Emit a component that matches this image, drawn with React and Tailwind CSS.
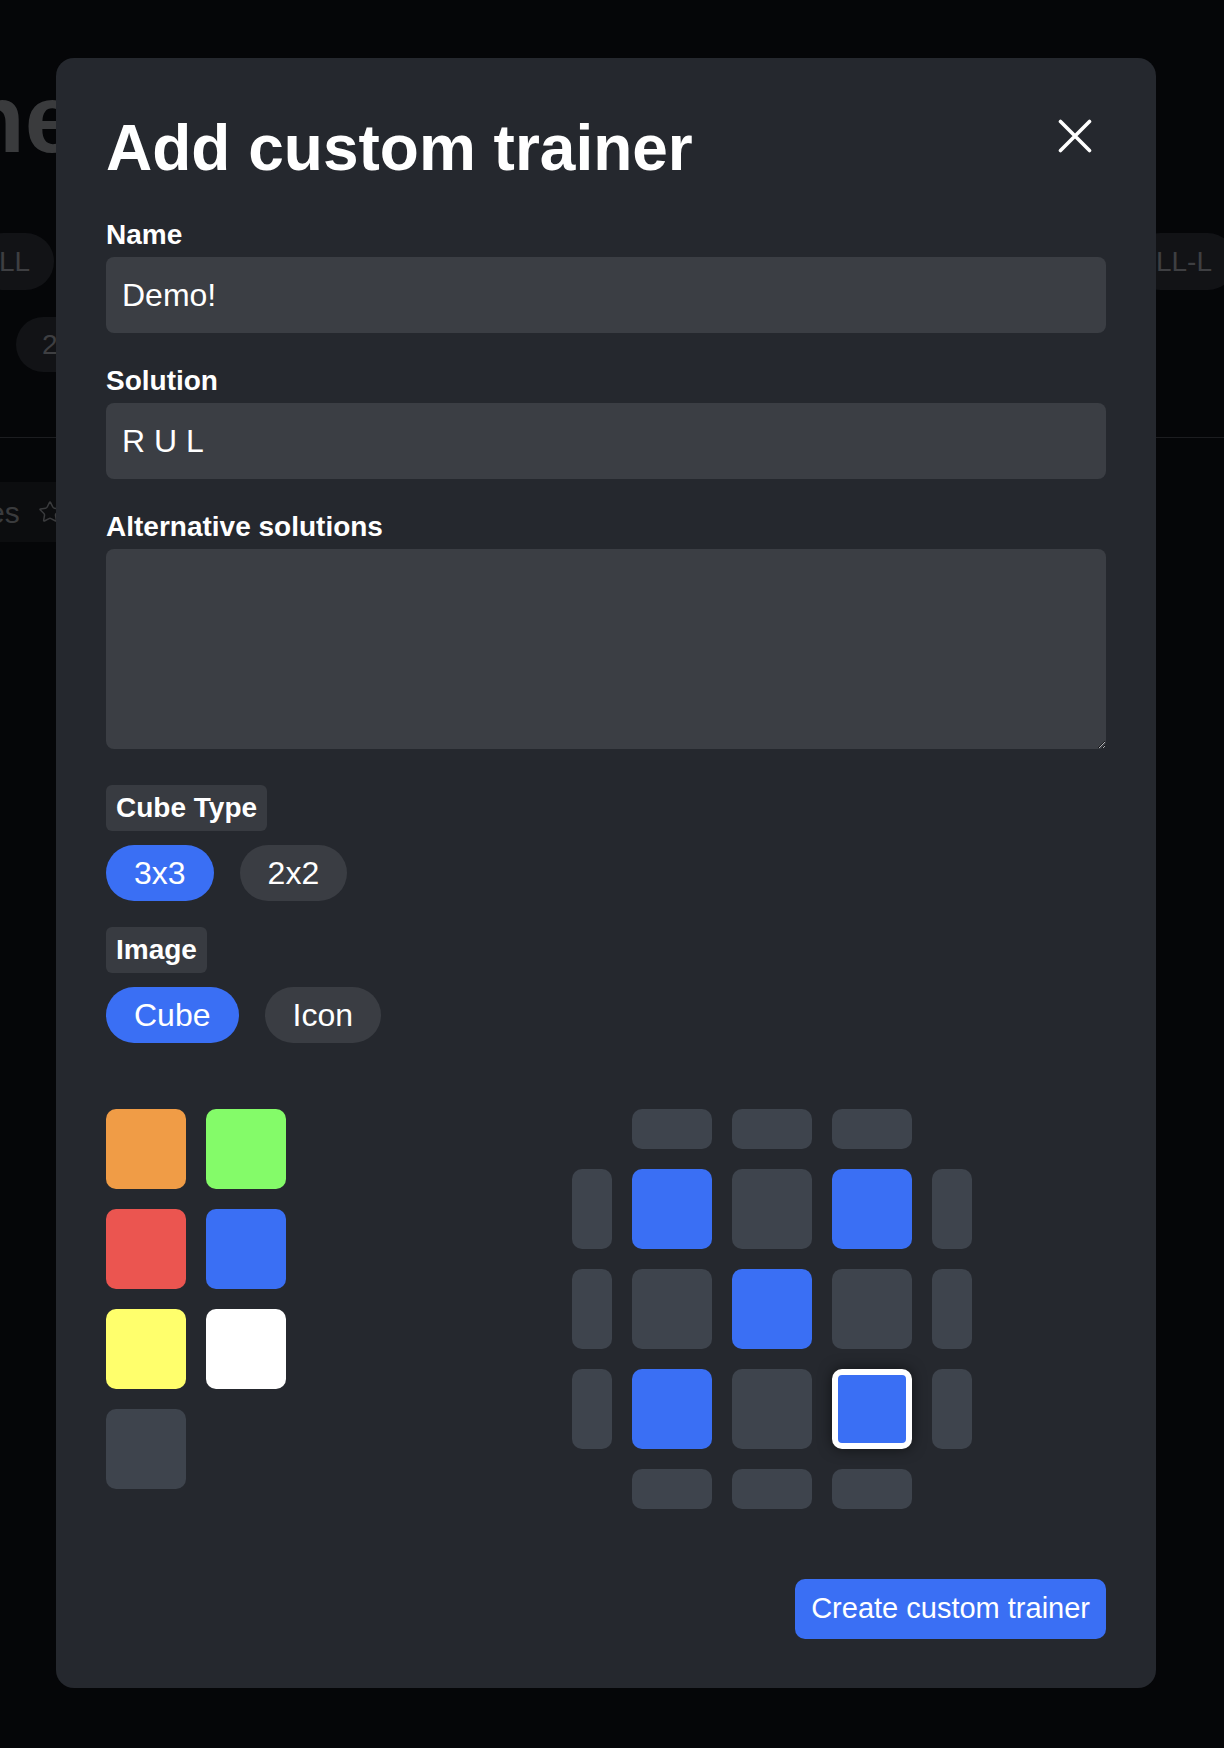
import React from 'react'
import { Star } from 'lucide-react'

const swatches = ['#f09c46', '#84fb69', '#eb5550', '#3a6ff4', '#ffff6c', '#ffffff', '#3e444d']

// cube face: 5x5 grid, corners empty, edges are the side stickers
const B = 'b'
const G = 'g'
const face = [
  [null, G, G, G, null],
  [G, B, G, B, G],
  [G, G, B, G, G],
  [G, B, G, 'sel', G],
  [null, G, G, G, null],
]

function BackgroundPage() {
  return (
    <div className="pt-[71px]">
      <div className="-ml-[34px] text-[96px] font-bold leading-none text-[#3a3b3d]">ne</div>
      <div className="mt-[66px] flex items-center justify-between">
        <div className="-ml-[25px] flex h-[57px] items-center rounded-full bg-[#121316] px-[24px] text-[28px] text-[#3e3f42]">LL</div>
        <div className="-mr-[12px] flex h-[57px] items-center rounded-full bg-[#121316] px-[24px] text-[28px] text-[#3e3f42]">LL-L</div>
      </div>
      <div className="mt-[27px] ml-[16px] flex h-[55px] w-fit items-center rounded-full bg-[#121316] px-[26px] text-[28px] text-[#3e3f42]">
        2
      </div>
      <div className="mt-[65px] h-px bg-[#1c1d20]" />
      <div className="mt-[44px] flex h-[60px] w-[300px] items-center gap-[18px] bg-[#0c0d0f] text-[30px] text-[#3a3b3d]">
        <span className="-ml-[12px]">es</span>
        <Star size={24} strokeWidth={1.5} className="text-[#3a3b3d]" />
      </div>
    </div>
  )
}

function Label({ children }) {
  return <label className="mb-[2px] block text-[28px] font-bold leading-[40px] text-white">{children}</label>
}

function TagLabel({ children }) {
  return (
    <div className="flex h-[46px] w-fit items-center rounded-[6px] bg-[#383b41] px-[10px] text-[28px] font-bold text-white">
      {children}
    </div>
  )
}

function Pill({ active, children }) {
  return (
    <button
      className={
        active
          ? 'h-[56px] rounded-full bg-[#3a6ff4] px-[28px] text-[32px] text-white'
          : 'h-[56px] rounded-full bg-[#3a3d43] px-[28px] text-[32px] text-white'
      }
    >
      {children}
    </button>
  )
}

function Sticker({ kind, row, col }) {
  const horizontal = row === 0 || row === 4
  const vertical = col === 0 || col === 4
  if (!kind) return <div />
  if (kind === 'sel') {
    return (
      <div className="h-[80px] w-[80px] rounded-[10px] border-[6px] border-white bg-[#3a6ff4] shadow-[0_0_14px_rgba(0,0,0,0.55)]" />
    )
  }
  const size = horizontal ? 'h-[40px] w-[80px]' : vertical ? 'h-[80px] w-[40px]' : 'h-[80px] w-[80px]'
  const color = kind === B ? 'bg-[#3a6ff4]' : 'bg-[#3e444d]'
  return <div className={`${size} ${color} rounded-[10px]`} />
}

function Modal() {
  return (
    <div className="w-[1100px] rounded-[18px] bg-[#25282e] px-[50px] pt-[50px] pb-[49px]">
      <div className="flex h-[80px] items-start justify-between">
        <h1 className="text-[64px] font-bold leading-[80px] text-white">Add custom trainer</h1>
        <button className="mt-[11px] mr-[14px]">
          <svg width="34" height="34" viewBox="0 0 34 34" fill="none">
            <path d="M2.5 2.5 31.5 31.5M31.5 2.5 2.5 31.5" stroke="white" strokeWidth="3.6" strokeLinecap="round" />
          </svg>
        </button>
      </div>

      <div className="mt-[27px]">
        <Label>Name</Label>
        <input
          defaultValue="Demo!"
          className="h-[76px] w-full rounded-[8px] bg-[#3b3e44] px-[16px] text-[32px] text-white outline-none"
        />
      </div>
      <div className="mt-[28px]">
        <Label>Solution</Label>
        <input
          defaultValue="R U L"
          className="h-[76px] w-full rounded-[8px] bg-[#3b3e44] px-[16px] text-[32px] text-white outline-none"
        />
      </div>
      <div className="mt-[28px]">
        <Label>Alternative solutions</Label>
        <textarea className="block h-[200px] w-full rounded-[8px] bg-[#3b3e44] px-[16px] py-[12px] text-[32px] text-white outline-none" />
      </div>

      <div className="mt-[36px]">
        <TagLabel>Cube Type</TagLabel>
        <div className="mt-[14px] flex gap-[26px]">
          <Pill active>3x3</Pill>
          <Pill>2x2</Pill>
        </div>
      </div>
      <div className="mt-[26px]">
        <TagLabel>Image</TagLabel>
        <div className="mt-[14px] flex gap-[26px]">
          <Pill active>Cube</Pill>
          <Pill>Icon</Pill>
        </div>
      </div>

      <div className="mt-[66px] flex items-start">
        <div className="grid w-[180px] grid-cols-[80px_80px] gap-[20px]">
          {swatches.map((c) => (
            <div key={c} className="h-[80px] w-[80px] rounded-[10px]" style={{ backgroundColor: c }} />
          ))}
        </div>
        <div className="ml-[286px] grid grid-cols-[40px_80px_80px_80px_40px] grid-rows-[40px_80px_80px_80px_40px] gap-[20px]">
          {face.map((r, ri) => r.map((k, ci) => <Sticker key={`${ri}-${ci}`} kind={k} row={ri} col={ci} />))}
        </div>
      </div>

      <div className="mt-[70px] flex justify-end">
        <button className="h-[60px] rounded-[10px] bg-[#3a6ff4] px-[16px] text-[29px] text-white">
          Create custom trainer
        </button>
      </div>
    </div>
  )
}

export default function App() {
  return (
    <div className="relative min-h-[1748px] overflow-hidden bg-[#050608] font-['Liberation_Sans',Arial,sans-serif] text-white">
      <BackgroundPage />
      <div className="absolute inset-0 pl-[56px] pt-[58px]">
        <Modal />
      </div>
    </div>
  )
}
